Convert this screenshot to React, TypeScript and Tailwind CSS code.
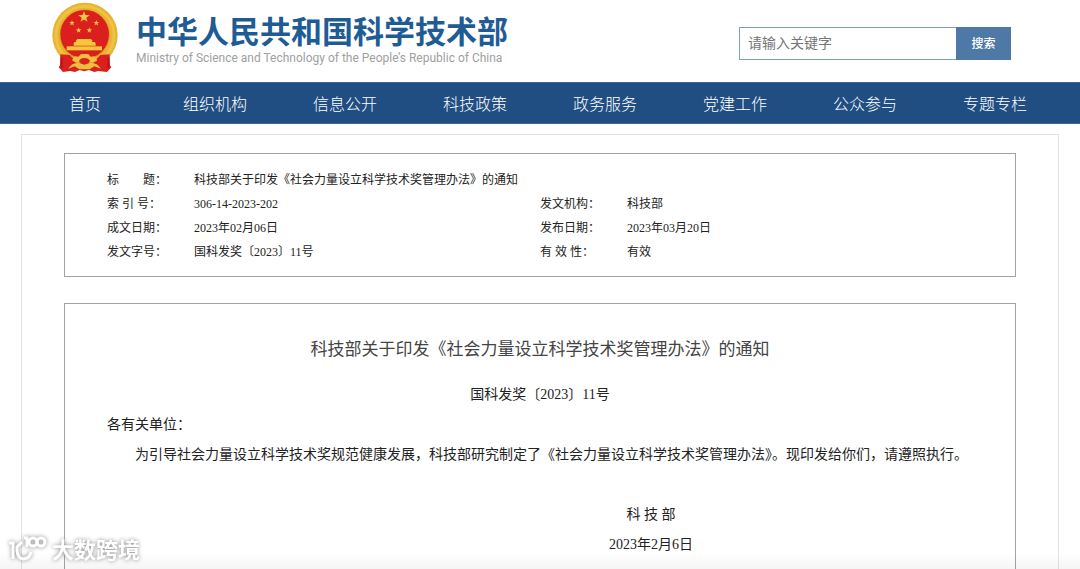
import { Fragment } from 'react';

const NAV_ITEMS = ['首页', '组织机构', '信息公开', '科技政策', '政务服务', '党建工作', '公众参与', '专题专栏'];

interface MetaCell {
  label: string;
  value: string;
}

const META_ROWS: MetaCell[][] = [
  [{ label: '标　　题：', value: '科技部关于印发《社会力量设立科学技术奖管理办法》的通知' }],
  [
    { label: '索 引 号：', value: '306-14-2023-202' },
    { label: '发文机构：', value: '科技部' },
  ],
  [
    { label: '成文日期：', value: '2023年02月06日' },
    { label: '发布日期：', value: '2023年03月20日' },
  ],
  [
    { label: '发文字号：', value: '国科发奖〔2023〕11号' },
    { label: '有 效 性：', value: '有效' },
  ],
];

const STAR = '0,-10 2.4,-3.2 9.5,-3.1 3.8,1.2 5.9,8.1 0,4 -5.9,8.1 -3.8,1.2 -9.5,-3.1 -2.4,-3.2';

function Emblem() {
  return (
    <svg viewBox="36 0 204 222" className="h-[74px] w-[68px] shrink-0" aria-hidden="true">
      {/* 麦穗环 */}
      <circle cx="138" cy="106" r="98" fill="#e8b432" />
      <circle cx="138" cy="106" r="87" fill="none" stroke="#efc344" strokeWidth="8" />
      <circle cx="137" cy="104" r="74" fill="none" stroke="#d99a20" strokeWidth="3" />
      <circle cx="137" cy="103" r="73" fill="#db1f1e" />
      {/* 红绸 */}
      <path d="M64 163 L92 165 L110 184 L166 184 L184 165 L212 163 L213 196 L217 202 L204 216 L178 213 L166 216 L150 210 L136 214 L122 210 L108 216 L94 213 L72 216 L59 202 L63 196 Z" fill="#d9201d" />
      <path d="M68 172 L68 205 M208 172 L208 205" stroke="#b5161a" strokeWidth="5" fill="none" />
      <g fill="#f3c63e">
        <polygon points={STAR} transform="translate(135 51) scale(1.8)" />
        <polygon points={STAR} transform="translate(99 69) scale(.9)" />
        <polygon points={STAR} transform="translate(172 69) scale(.9)" />
        <polygon points={STAR} transform="translate(119 91) scale(.9)" />
        <polygon points={STAR} transform="translate(151 91) scale(.9)" />
        {/* 天安门 */}
        <path d="M110 122 L115 117 H156 L161 122 L158 126 H167 L170 130 V137 H104 V130 L107 126 H112 Z" />
        <rect x="83" y="139" width="106" height="12" />
      </g>
      {/* 齿轮 */}
      <path d="M99 181 L108 169 L118 170 L126 162 H148 L155 170 L166 169 L175 181 L163 188 H111 Z" fill="#f0c140" />
      <path d="M120 184 Q124 174 136 174 Q149 174 153 184 L147 190 H126 Z" fill="#db1f1e" />
      <path d="M88 206 Q97 188 119 188 L136 194 L154 188 Q176 188 186 206 L166 199 L152 208 H121 L107 199 Z" fill="#eebd3a" />
    </svg>
  );
}

function SiteHeader() {
  return (
    <header className="flex h-[82px] items-start justify-between pr-[69px] pl-[51px]">
      <div className="flex gap-[17px]">
        <Emblem />
        <div className="pt-[10px]">
          <h1 className="text-[31px] leading-10 font-bold whitespace-nowrap text-[#1f5c96]">中华人民共和国科学技术部</h1>
          <p className="font-['Roboto',sans-serif] text-[12px] leading-4 whitespace-nowrap text-[#a0a0a0]">
            Ministry of Science and Technology of the People’s Republic of China
          </p>
        </div>
      </div>
      <form className="mt-[27px] flex h-[33px]" onSubmit={(e) => e.preventDefault()}>
        <input
          type="text"
          aria-label="请输入关键字"
          placeholder="请输入关键字"
          className="w-[217px] border border-r-0 border-[#7f9fc4] px-2 pb-1 text-sm outline-none placeholder:text-[#757575]"
        />
        <button type="submit" className="w-[55px] bg-[#4e79a7] pb-0.5 text-xs font-medium text-white">
          搜索
        </button>
      </form>
    </header>
  );
}

function NavBar() {
  return (
    <nav className="grid h-[42px] grid-cols-8 items-center border-y border-[#3f689a] bg-[#204d82] px-5 text-center text-base font-light text-white">
      {NAV_ITEMS.map((item) => (
        <a key={item} href="#">
          {item}
        </a>
      ))}
    </nav>
  );
}

function MetaTable() {
  return (
    <table className="w-full table-fixed text-xs leading-6 text-[#222]">
      <colgroup>
        <col className="w-[87px]" />
        <col />
        <col className="w-[87px]" />
        <col />
      </colgroup>
      <tbody>
        {META_ROWS.map((row) => (
          <tr key={row[0].label}>
            {row.map((cell) => (
              <Fragment key={cell.label}>
                <th scope="row" className="text-left font-normal">
                  {cell.label}
                </th>
                <td colSpan={row.length === 1 ? 3 : 1}>{cell.value}</td>
              </Fragment>
            ))}
          </tr>
        ))}
      </tbody>
    </table>
  );
}

function Watermark() {
  return (
    <div className="absolute bottom-1.5 left-2 flex items-center gap-1 text-white drop-shadow-[0_0_2px_#888]">
      <svg viewBox="0 0 40 30" className="h-[30px] w-10" fill="none" stroke="currentColor" strokeWidth="3" aria-hidden="true">
        <path d="M1 10 H5 V26 M14 9 L9 14 V18 Q10 26 16 26 Q22 25 23 19" />
        <path d="M16 5 H19 V14" />
        <circle cx="25" cy="9" r="4" />
        <circle cx="33" cy="9" r="4" />
      </svg>
      <span className="text-[22px] leading-[30px] font-bold">大数跨境</span>
    </div>
  );
}

export default function App() {
  return (
    <div className="relative flex min-h-screen flex-col bg-white font-['Noto_Sans_CJK_SC',sans-serif]">
      <SiteHeader />
      <NavBar />
      <main className="mx-[21px] mt-[10px] flex flex-1 flex-col border border-b-0 border-[#e3e3e3] px-[42px] pt-[18px] font-['Liberation_Serif','Noto_Sans_CJK_SC',serif]">
        <section className="border border-[#a3a3a3] px-[42px] pt-[14px] pb-3">
          <MetaTable />
        </section>
        <article className="mt-[26px] flex-1 border border-b-0 border-[#a3a3a3] px-[42px] pt-[31px] text-sm leading-[30px] text-[#222]">
          <h2 className="text-center text-[17px] text-[#444]">科技部关于印发《社会力量设立科学技术奖管理办法》的通知</h2>
          <p className="mt-[15px] text-center">国科发奖〔2023〕11号</p>
          <p>各有关单位：</p>
          <p className="indent-7 whitespace-nowrap">
            为引导社会力量设立科学技术奖规范健康发展，科技部研究制定了《社会力量设立科学技术奖管理办法》。现印发给你们，请遵照执行。
          </p>
          <div className="mt-[30px] ml-auto w-[408px]">
            <div className="w-[172px] text-center">
              <p>科 技 部</p>
              <p>2023年2月6日</p>
            </div>
          </div>
        </article>
      </main>
      <div className="pointer-events-none absolute inset-x-0 bottom-0 h-4 bg-linear-to-b from-transparent to-black/4" />
      <Watermark />
    </div>
  );
}
